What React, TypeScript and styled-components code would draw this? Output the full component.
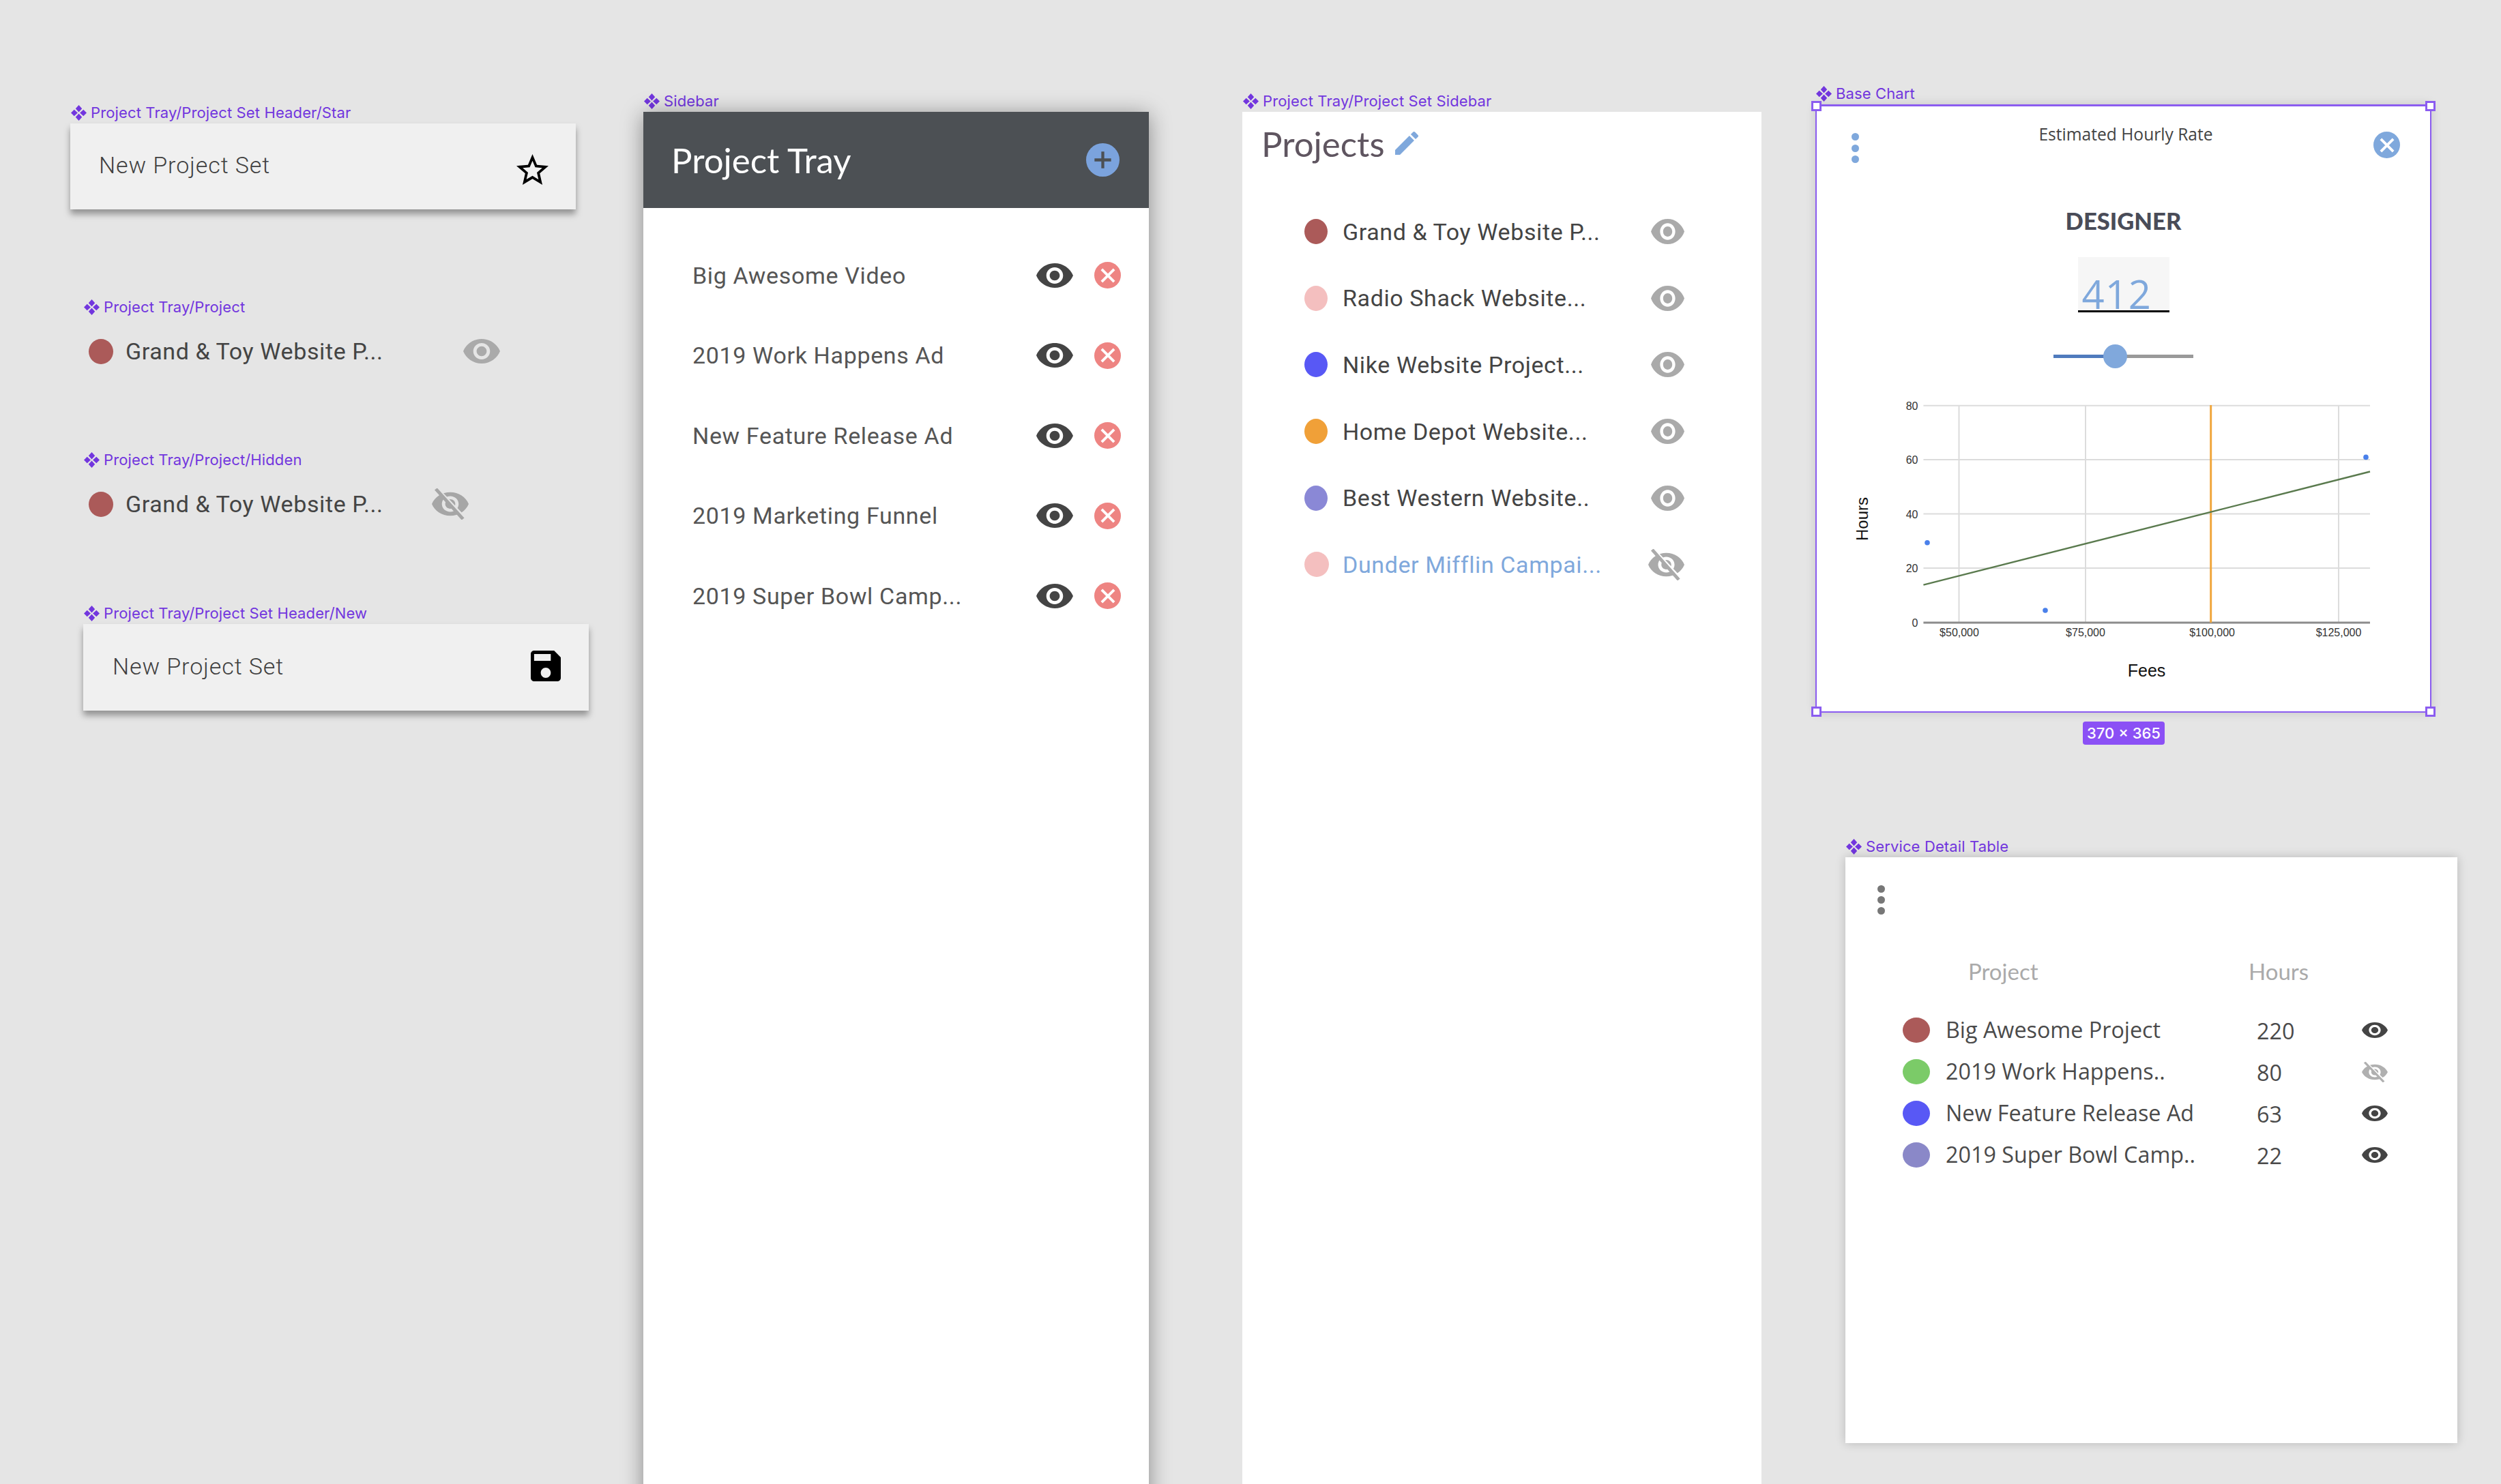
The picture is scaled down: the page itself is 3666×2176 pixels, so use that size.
import React from "react";
import styled, { createGlobalStyle } from "styled-components";

const Global = createGlobalStyle`
  html, body { margin: 0; padding: 0; background: #e5e5e5; }
  #root { width: 3666px; height: 2176px; }
`;

const Canvas = styled.div`
  position: relative;
  width: 3666px;
  height: 2176px;
  overflow: hidden;
  background: #e5e5e5;
  font-family: Roboto, "Liberation Sans", sans-serif;
`;

const Frame = styled.section<{ $x: number; $y: number }>`
  position: absolute;
  left: ${(p) => p.$x}px;
  top: ${(p) => p.$y}px;
  display: flex;
  flex-direction: column;
`;

const LabelRow = styled.div`
  display: flex;
  align-items: center;
  gap: 6px;
  height: 24px;
  margin-bottom: 4px;
  padding-left: 1px;
  font-family: Inter, sans-serif;
  font-size: 22px;
  letter-spacing: 0.13px;
  color: #7236de;
  white-space: nowrap;
`;

const Diamond = styled.svg`
  width: 23px;
  height: 23px;
  fill: #7236de;
  flex: none;
`;

const FrameLabel = ({ children }: { children: React.ReactNode }) => (
  <LabelRow>
    <Diamond viewBox="0 0 22 22">
      <polygon points="11,0 15.5,5 11,10 6.5,5" />
      <polygon points="11,12 15.5,17 11,22 6.5,17" />
      <polygon points="0,11 4.5,6.5 9.5,11 4.5,15.5" />
      <polygon points="22,11 17.5,6.5 12.5,11 17.5,15.5" />
    </Diamond>
    {children}
  </LabelRow>
);

const Icon = styled.svg<{ $w: number; $h: number; $c: string; $mt?: number }>`
  width: ${(p) => p.$w}px;
  height: ${(p) => p.$h}px;
  fill: ${(p) => p.$c};
  flex: none;
  margin-top: ${(p) => p.$mt ?? 0}px;
`;

const EYE =
  "M12 4.5C7 4.5 2.73 7.61 1 12c1.73 4.39 6 7.5 11 7.5s9.27-3.11 11-7.5c-1.73-4.39-6-7.5-11-7.5zM12 17c-2.76 0-5-2.24-5-5s2.24-5 5-5 5 2.24 5 5-2.24 5-5 5zm0-8c-1.66 0-3 1.34-3 3s1.34 3 3 3 3-1.34 3-3-1.34-3-3-3z";

const Eye = ({ w, h, c }: { w: number; h: number; c: string }) => (
  <Icon $w={w} $h={h} $c={c} viewBox="1 4.5 22 15" preserveAspectRatio="none">
    <path d={EYE} />
  </Icon>
);

const EyeOff = ({ w, h, c, bg }: { w: number; h: number; c: string; bg: string }) => (
  <Icon $w={w} $h={h} $c={c} viewBox="1 2 22 20" preserveAspectRatio="none">
    <path d={EYE} />
    <line x1="4.4" y1="2.9" x2="20.4" y2="21.1" stroke={bg} strokeWidth="2.4" />
    <line x1="3.4" y1="2.4" x2="19.6" y2="21.6" stroke={c} strokeWidth="2" />
  </Icon>
);

const KebabCol = styled.div<{ $c: string; $gap: number }>`
  display: flex;
  flex-direction: column;
  gap: ${(p) => p.$gap}px;
  span {
    display: block;
    width: 11px;
    height: 11px;
    border-radius: 50%;
    background: ${(p) => p.$c};
  }
`;

const Kebab = ({ c, gap }: { c: string; gap: number }) => (
  <KebabCol $c={c} $gap={gap}>
    <span />
    <span />
    <span />
  </KebabCol>
);

/* ----- small component frames ----- */

const SetHeader = styled.div<{ $pl: number; $pr: number; $h: number }>`
  width: 741px;
  height: ${(p) => p.$h}px;
  box-sizing: border-box;
  padding: 0 ${(p) => p.$pr}px 4px ${(p) => p.$pl}px;
  display: flex;
  align-items: center;
  justify-content: space-between;
  background: #f0f0f0;
  box-shadow: 0 7px 9px rgba(0, 0, 0, 0.36);
`;

const SetTitle = styled.span`
  font-size: 34px;
  font-weight: 300;
  letter-spacing: 0.9px;
  color: #404040;
`;

const ProjectRow = styled.div`
  display: flex;
  align-items: center;
  margin-top: 29px;
  padding-left: 8px;
  height: 40px;
`;

const Swatch = styled.span<{ $c: string; $w?: number; $h?: number }>`
  display: block;
  flex: none;
  width: ${(p) => p.$w ?? 36}px;
  height: ${(p) => p.$h ?? 37}px;
  border-radius: 50%;
  background: ${(p) => p.$c};
`;

const ProjectName = styled.span<{ $w: number; $c?: string; $ml: number }>`
  display: block;
  flex: none;
  width: ${(p) => p.$w}px;
  margin-left: ${(p) => p.$ml}px;
  font-size: 34px;
  letter-spacing: 0.6px;
  color: ${(p) => p.$c ?? "#444"};
  white-space: nowrap;
`;

const IconSlot = styled.span<{ $ml: number }>`
  display: flex;
  margin-left: ${(p) => p.$ml}px;
`;

/* ----- sidebar ----- */

const SidebarPanel = styled.div`
  width: 741px;
  height: 2060px;
  background: #fff;
  box-shadow: 0 4px 30px rgba(0, 0, 0, 0.4);
`;

const SidebarHead = styled.header`
  height: 141px;
  box-sizing: border-box;
  padding: 0 43px 0 41px;
  display: flex;
  align-items: center;
  justify-content: space-between;
  background: #4c5054;
`;

const SidebarTitle = styled.h1`
  margin: 0;
  font-family: Lato, sans-serif;
  font-size: 51px;
  font-weight: 400;
  color: #fff;
`;

const Round = styled.span<{ $size: number; $c: string }>`
  display: flex;
  align-items: center;
  justify-content: center;
  flex: none;
  width: ${(p) => p.$size}px;
  height: ${(p) => p.$size}px;
  border-radius: 50%;
  background: ${(p) => p.$c};
`;

const Glyph = styled.svg<{ $w: number; $c: string; $sw: number }>`
  width: ${(p) => p.$w}px;
  height: ${(p) => p.$w}px;
  stroke: ${(p) => p.$c};
  stroke-width: ${(p) => p.$sw};
  fill: none;
`;

const SidebarList = styled.ul`
  list-style: none;
  margin: 0;
  padding: 40px 41px 0 72px;
`;

const SidebarItem = styled.li`
  height: 117.5px;
  display: flex;
  align-items: center;
`;

const SidebarName = styled.span`
  flex: 1;
  font-size: 34px;
  letter-spacing: 0.65px;
  color: #555;
  white-space: nowrap;
`;

const Gap = styled.span<{ $w: number }>`
  flex: none;
  width: ${(p) => p.$w}px;
`;

/* ----- project set ----- */

const SetPanel = styled.div`
  width: 761px;
  height: 2040px;
  background: #fff;
`;

const SetPanelHead = styled.header`
  height: 96px;
  box-sizing: border-box;
  padding: 0 0 4px 28px;
  display: flex;
  align-items: center;
  gap: 16px;
`;

const SetPanelTitle = styled.h2`
  margin: 0;
  font-family: Lato, sans-serif;
  font-size: 51px;
  font-weight: 400;
  color: #5f5560;
`;

const SetList = styled.ul`
  list-style: none;
  margin: 31px 0 0;
  padding: 0 113px 0 91px;
`;

const SetItem = styled.li`
  height: 97.6px;
  display: flex;
  align-items: center;
  justify-content: space-between;
`;

const SetItemLead = styled.span`
  display: flex;
  align-items: center;
`;

/* ----- base chart ----- */

const ChartPanel = styled.div`
  position: relative;
  width: 903px;
  height: 892px;
  box-sizing: border-box;
  border: 2px solid #8b5cf0;
  border-top-width: 3px;
  background: #fff;
  box-shadow: 0 0 14px rgba(0, 0, 0, 0.14);
  display: flex;
  flex-direction: column;
  align-items: center;
`;

const Handle = styled.span<{ $l: boolean; $t: boolean }>`
  position: absolute;
  ${(p) => (p.$l ? "left: -8px;" : "right: -8px;")}
  ${(p) => (p.$t ? "top: -8px;" : "bottom: -8px;")}
  width: 15px;
  height: 15px;
  box-sizing: border-box;
  border: 3px solid #8b5cf0;
  background: #fff;
`;

const ChartHead = styled.header`
  align-self: stretch;
  height: 146px;
  display: grid;
  grid-template-columns: 103px 1fr 96px;
  align-items: start;
`;

const ChartKebabCell = styled.div`
  padding: 39px 0 0 51px;
`;

const ChartTitle = styled.h3`
  margin: 24px 0 0;
  text-align: center;
  font-family: "Open Sans", sans-serif;
  font-size: 24.6px;
  font-weight: 400;
  line-height: 34px;
  color: #444;
`;

const ChartCloseCell = styled.div`
  display: flex;
  justify-content: flex-end;
  padding: 37px 44px 0 0;
`;

const Role = styled.div`
  height: 44px;
  line-height: 44px;
  font-family: Lato, sans-serif;
  font-size: 34.6px;
  font-weight: 900;
  color: #4a4c58;
`;

const RateField = styled.div`
  margin-top: 31px;
  width: 134px;
  height: 81px;
  box-sizing: border-box;
  background: #f6f6f6;
  border-bottom: 3px solid #000;
  padding-left: 6px;
  display: flex;
  align-items: flex-end;
  font-family: "Open Sans", sans-serif;
  font-weight: 400;
  font-size: 58px;
  line-height: 48px;
  color: #7fa8dc;
  letter-spacing: 1px;
`;

const Slider = styled.div`
  position: relative;
  margin-top: 47px;
  width: 205px;
  height: 35px;
  flex: none;
  display: flex;
  align-items: center;
`;

const SliderFill = styled.span<{ $w: number; $c: string }>`
  display: block;
  height: 5px;
  width: ${(p) => p.$w}px;
  background: ${(p) => p.$c};
`;

const SliderThumb = styled.span`
  position: absolute;
  left: 73px;
  top: 0;
  width: 35px;
  height: 35px;
  border-radius: 50%;
  background: #80a8dc;
`;

const ChartSvg = styled.svg`
  display: block;
  margin-top: 35px;
  align-self: flex-start;
  width: 899px;
  height: 445px;
`;

/* ----- service table ----- */

const ServicePanel = styled.div`
  width: 897px;
  height: 859px;
  box-sizing: border-box;
  padding-top: 41px;
  background: #fff;
  box-shadow: 0 0 14px rgba(0, 0, 0, 0.2);
`;

const ServiceKebab = styled.div`
  padding-left: 47px;
`;

const TableHead = styled.div`
  margin: 63px 0 36px;
  padding-left: 180px;
  height: 40px;
  display: grid;
  grid-template-columns: 411px auto;
  align-items: center;
  font-family: Lato, sans-serif;
  font-size: 33px;
  color: #aaa;
`;

const TableRow = styled.div`
  height: 61px;
  padding-left: 84px;
  display: grid;
  grid-template-columns: 63px 456px 154px 38px;
  align-items: center;
  font-family: "Open Sans", sans-serif;
  font-size: 32.3px;
  line-height: 58px;
  color: #4a4a4a;
  white-space: nowrap;
`;

const TableName = styled.span`
  margin-bottom: 3px;
`;

const TableHours = styled.span`
  margin-top: 1px;
`;

/* ----- data ----- */

const sidebarItems = [
  "Big Awesome Video",
  "2019 Work Happens Ad",
  "New Feature Release Ad",
  "2019 Marketing Funnel",
  "2019 Super Bowl Camp...",
];

const setItems = [
  { name: "Grand & Toy Website P...", c: "#ab5a59" },
  { name: "Radio Shack Website...", c: "#f4bfbf" },
  { name: "Nike Website Project...", c: "#5858f5" },
  { name: "Home Depot Website...", c: "#f0a038" },
  { name: "Best Western Website..", c: "#8a88d6" },
];

const tableRows = [
  { name: "Big Awesome Project", hours: "220", c: "#ab5a59", hidden: false },
  { name: "2019 Work Happens..", hours: "80", c: "#7bcb68", hidden: true },
  { name: "New Feature Release Ad", hours: "63", c: "#5858f5", hidden: false },
  { name: "2019 Super Bowl Camp..", hours: "22", c: "#8a88c8", hidden: false },
];

const OX = 2663;
const OY = 576;
const X = (v: number) => v - OX;
const Y = (v: number) => v - OY;

const Chart = () => {
  const rows = [
    { label: "80", y: 595.7 },
    { label: "60", y: 675 },
    { label: "40", y: 754.6 },
    { label: "20", y: 834 },
  ];
  const cols = [
    { label: "$50,000", x: 2871.5, tx: 2872 },
    { label: "$75,000", x: 3057, tx: 3057 },
    { label: "$100,000", x: null, tx: 3242.6 },
    { label: "$125,000", x: 3428, tx: 3428 },
  ];
  const labelStyle = { fontFamily: '"Liberation Sans", sans-serif', fontSize: 16 };
  return (
    <ChartSvg viewBox="0 0 899 445">
      {rows.map((r) => (
        <line key={r.label} x1={X(2819.4)} x2={X(3474)} y1={Y(r.y)} y2={Y(r.y)} stroke="#dcdcdc" strokeWidth="2" />
      ))}
      {cols.map((c) =>
        c.x ? <line key={c.label} x1={X(c.x)} x2={X(c.x)} y1={Y(595)} y2={Y(914)} stroke="#dcdcdc" strokeWidth="2" /> : null,
      )}
      <line x1={X(2819.4)} x2={X(3474)} y1={Y(914)} y2={Y(914)} stroke="#8c8c8c" strokeWidth="3" />
      <line x1={X(3240.7)} x2={X(3240.7)} y1={Y(595)} y2={Y(914)} stroke="#f0a63c" strokeWidth="3" />
      <line x1={X(2819.4)} y1={Y(858.6)} x2={X(3474)} y2={Y(692.5)} stroke="#5a7a4e" strokeWidth="2.4" />
      <circle cx={X(2825)} cy={Y(796.8)} r="3.8" fill="#4a80ea" />
      <circle cx={X(2998)} cy={Y(896)} r="3.8" fill="#4a80ea" />
      <circle cx={X(3468)} cy={Y(671.4)} r="3.8" fill="#4a80ea" />
      {[...rows, { label: "0", y: 914 }].map((r) => (
        <text key={r.label} x={X(2811.5)} y={Y(r.y) + 6} textAnchor="end" fill="#333" style={labelStyle}>
          {r.label}
        </text>
      ))}
      {cols.map((c) => (
        <text key={c.label} x={X(c.tx)} y={Y(934)} textAnchor="middle" fill="#333" style={labelStyle}>
          {c.label}
        </text>
      ))}
      <text
        transform={`translate(${X(2738)} ${Y(762)}) rotate(-90)`}
        textAnchor="middle"
        fill="#111"
        style={{ fontFamily: '"Liberation Sans", sans-serif', fontSize: 24 }}
      >
        Hours
      </text>
      <text
        x={X(3146.5)}
        y={Y(993)}
        textAnchor="middle"
        fill="#111"
        style={{ fontFamily: '"Liberation Sans", sans-serif', fontSize: 25 }}
      >
        Fees
      </text>
    </ChartSvg>
  );
};

const SizeBadge = styled.span`
  position: absolute;
  left: 390px;
  top: 902px;
  width: 120px;
  height: 34px;
  display: flex;
  align-items: center;
  justify-content: center;
  border-radius: 4px;
  background: #8b50f5;
  color: #fff;
  font-family: Inter, sans-serif;
  font-size: 22px;
  font-weight: 500;
  white-space: nowrap;
`;

const CloseX = ({ w, c, sw }: { w: number; c: string; sw: number }) => (
  <Glyph $w={w} $c={c} $sw={sw} viewBox="0 0 20 20">
    <path d="M3 3 L17 17 M17 3 L3 17" />
  </Glyph>
);

export default function App() {
  return (
    <Canvas>
      <Global />

      <Frame $x={103} $y={153}>
        <FrameLabel>Project Tray/Project Set Header/Star</FrameLabel>
        <SetHeader $pl={42} $pr={40} $h={126}>
          <SetTitle>New Project Set</SetTitle>
          <Icon $w={47} $h={45} $c="#000" $mt={12} viewBox="2 2 20 19" preserveAspectRatio="none">
            <path d="M22 9.24l-7.19-.62L12 2 9.19 8.63 2 9.24l5.46 4.73L5.82 21 12 17.27 18.18 21l-1.63-7.03L22 9.24zM12 15.4l-3.76 2.27 1-4.28-3.32-2.88 4.38-.38L12 6.1l1.71 4.04 4.38.38-3.32 2.88 1 4.28L12 15.4z" />
          </Icon>
        </SetHeader>
      </Frame>

      <Frame $x={122} $y={438}>
        <FrameLabel>Project Tray/Project</FrameLabel>
        <ProjectRow>
          <Swatch $c="#ab5a59" />
          <ProjectName $w={376} $ml={18}>Grand &amp; Toy Website P...</ProjectName>
          <IconSlot $ml={119}>
            <Eye w={54} h={36} c="#aaaaaa" />
          </IconSlot>
        </ProjectRow>
      </Frame>

      <Frame $x={122} $y={662}>
        <FrameLabel>Project Tray/Project/Hidden</FrameLabel>
        <ProjectRow>
          <Swatch $c="#ab5a59" />
          <ProjectName $w={376} $ml={18}>Grand &amp; Toy Website P...</ProjectName>
          <IconSlot $ml={73}>
            <EyeOff w={54} h={46} c="#a6a6a6" bg="#e5e5e5" />
          </IconSlot>
        </ProjectRow>
      </Frame>

      <Frame $x={122} $y={887}>
        <FrameLabel>Project Tray/Project Set Header/New</FrameLabel>
        <SetHeader $pl={43} $pr={41} $h={127}>
          <SetTitle>New Project Set</SetTitle>
          <Icon $w={44} $h={45} $c="#000" viewBox="3 3 18 18" preserveAspectRatio="none">
            <path d="M17 3H5c-1.11 0-2 .9-2 2v14c0 1.1.89 2 2 2h14c1.1 0 2-.9 2-2V7l-4-4zm-5 16c-1.66 0-3-1.34-3-3s1.34-3 3-3 3 1.34 3 3-1.34 3-3 3zm3-10H5V5h10v4z" />
          </Icon>
        </SetHeader>
      </Frame>

      <Frame $x={943} $y={136}>
        <FrameLabel>Sidebar</FrameLabel>
        <SidebarPanel>
          <SidebarHead>
            <SidebarTitle>Project Tray</SidebarTitle>
            <Round $size={49} $c="#7ba3dd">
              <Glyph $w={27} $c="#4c5054" $sw={3.2} viewBox="0 0 20 20">
                <path d="M10 1 V19 M1 10 H19" />
              </Glyph>
            </Round>
          </SidebarHead>
          <SidebarList>
            {sidebarItems.map((name) => (
              <SidebarItem key={name}>
                <SidebarName>{name}</SidebarName>
                <Eye w={54} h={36} c="#444444" />
                <Gap $w={31} />
                <Round $size={39} $c="#ee8482">
                  <CloseX w={26} c="#fff" sw={3} />
                </Round>
              </SidebarItem>
            ))}
          </SidebarList>
        </SidebarPanel>
      </Frame>

      <Frame $x={1821} $y={136}>
        <FrameLabel>Project Tray/Project Set Sidebar</FrameLabel>
        <SetPanel>
          <SetPanelHead>
            <SetPanelTitle>Projects</SetPanelTitle>
            <Icon $w={34} $h={34} $c="#7fa8dc" $mt={-1} viewBox="3 3 18 18">
              <path d="M3 17.25V21h3.75L17.81 9.94l-3.75-3.75L3 17.25zM20.71 7.04c.39-.39.39-1.02 0-1.41l-2.34-2.34c-.39-.39-1.02-.39-1.41 0l-1.83 1.83 3.75 3.75 1.83-1.83z" />
            </Icon>
          </SetPanelHead>
          <SetList>
            {setItems.map((it) => (
              <SetItem key={it.name}>
                <SetItemLead>
                  <Swatch $c={it.c} $w={34} />
                  <ProjectName $w={400} $ml={22}>{it.name}</ProjectName>
                </SetItemLead>
                <Eye w={49} h={37} c="#aaaaaa" />
              </SetItem>
            ))}
            <SetItem>
              <SetItemLead>
                <Swatch $c="#f4bfbf" $w={36} />
                <ProjectName $w={400} $ml={20} $c="#7fa8dc">Dunder Mifflin Campai...</ProjectName>
              </SetItemLead>
              <EyeOff w={53} h={46} c="#aaaaaa" bg="#ffffff" />
            </SetItem>
          </SetList>
        </SetPanel>
      </Frame>

      <Frame $x={2661} $y={125}>
        <FrameLabel>Base Chart</FrameLabel>
        <ChartPanel>
          <Handle $l $t />
          <Handle $l={false} $t />
          <Handle $l $t={false} />
          <Handle $l={false} $t={false} />
          <ChartHead>
            <ChartKebabCell>
              <Kebab c="#7fa8dc" gap={5.7} />
            </ChartKebabCell>
            <ChartTitle>Estimated Hourly Rate</ChartTitle>
            <ChartCloseCell>
              <Round $size={39} $c="#7fa8dc">
                <CloseX w={26} c="#fff" sw={3} />
              </Round>
            </ChartCloseCell>
          </ChartHead>
          <Role>DESIGNER</Role>
          <RateField>412</RateField>
          <Slider>
            <SliderFill $w={80} $c="#4f7bbd" />
            <SliderFill $w={125} $c="#999999" />
            <SliderThumb />
          </Slider>
          <Chart />
          <SizeBadge>370 × 365</SizeBadge>
        </ChartPanel>
      </Frame>

      <Frame $x={2705} $y={1229}>
        <FrameLabel>Service Detail Table</FrameLabel>
        <ServicePanel>
          <ServiceKebab>
            <Kebab c="#777777" gap={5} />
          </ServiceKebab>
          <TableHead>
            <span>Project</span>
            <span>Hours</span>
          </TableHead>
          {tableRows.map((r) => (
            <TableRow key={r.name}>
              <Swatch $c={r.c} $w={40} $h={37} />
              <TableName>{r.name}</TableName>
              <TableHours>{r.hours}</TableHours>
              {r.hidden ? (
                <EyeOff w={38} h={30} c="#b0b0b0" bg="#ffffff" />
              ) : (
                <Eye w={38} h={23} c="#444444" />
              )}
            </TableRow>
          ))}
        </ServicePanel>
      </Frame>
    </Canvas>
  );
}
